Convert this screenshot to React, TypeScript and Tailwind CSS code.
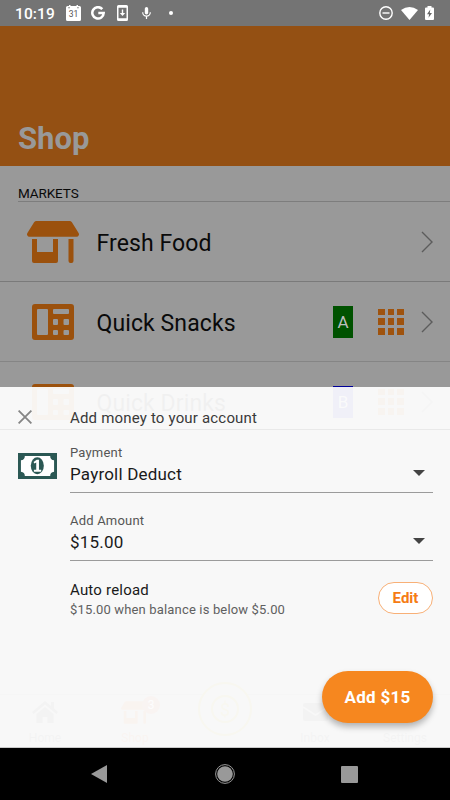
type IconProps = { className?: string };

const StoreIcon = ({ className }: IconProps) => (
  <svg viewBox="0 0 52 42" className={className} fill="currentColor">
    <path d="M9.500 0h33q1.500 0 2.400 1.200L51.600 12q.8 1.500 0 2.500-.5 1.200-2 1.200H2.400q-1.500 0-2-1.200-.8-1 0-2.500L7.100 1.200Q8 0 9.500 0Z" />
    <path d="M5 18h5v13h16V18h5v22q0 2-2 2H7q-2 0-2-2ZM41.500 18h5v22q0 2-2 2h-1q-2 0-2-2Z" />
  </svg>
);

const VendingIcon = ({ className }: IconProps) => (
  <svg viewBox="0 0 42 36" className={className}>
    <path
      fill="currentColor"
      fillRule="evenodd"
      d="M3 0h36q3 0 3 3v30q0 3-3 3H3q-3 0-3-3V3q0-3 3-3ZM6 5q-1 0-1 1v24q0 1 1 1h9q1 0 1-1V6q0-1-1-1ZM22 5q-1 0-1 1v3q0 1 1 1h14q1 0 1-1V6q0-1-1-1ZM22 15q-1 0-1 1v4q0 1 1 1h3q1 0 1-1v-4q0-1-1-1ZM32.500 15q-1 0-1 1v4q0 1 1 1h3.500q1 0 1-1v-4q0-1-1-1ZM22 26q-1 0-1 1v3q0 1 1 1h3q1 0 1-1v-3q0-1-1-1ZM32.500 26q-1 0-1 1v3q0 1 1 1h3.500q1 0 1-1v-3q0-1-1-1Z"
    />
  </svg>
);

const Chevron = () => (
  <svg viewBox="0 0 12 22" className="w-3 h-[22px] shrink-0" fill="none" stroke="#5c5c5c" strokeWidth="1.4">
    <path d="M1 1l10 10L1 21" />
  </svg>
);

const Keypad = () => (
  <div className="grid grid-cols-3 gap-[3px] w-[26px] h-[26px] shrink-0">
    {Array.from({ length: 9 }, (_, i) => (
      <div key={i} className="bg-[#9f530e]" />
    ))}
  </div>
);

const StatusBar = () => (
  <div className="h-[26px] shrink-0 bg-[#747474] flex items-center justify-between pl-[15px] pr-4 text-white">
    <div className="flex items-center">
      <span className="w-[51px] text-[15.500px] leading-[26px] font-medium tracking-[0.1px] pt-px">10:19</span>
      <svg width="15" height="16" viewBox="0 0 15 16">
        <path fill="#fff" fillRule="evenodd" d="M1.500 1H3V0h1.500v1h6V0H12v1h1.500Q15 1 15 2.500v12q0 1.500-1.500 1.500h-12Q0 16 0 14.500v-12Q0 1 1.500 1ZM2.300 2.300h1.500v.9H2.300ZM11.200 2.300h1.500v.9h-1.500Z" />
        <text x="7.500" y="12" textAnchor="middle" fontSize="8.500" fill="#555" fontFamily="Roboto">31</text>
      </svg>
      <svg width="14" height="14" viewBox="0 0 14 14" className="ml-[10px]" fill="none" stroke="#fff" strokeWidth="2.500">
        <path d="M11.300 3.100A5.700 5.700 0 1 0 12.700 7H7.300" />
      </svg>
      <svg width="11" height="16" viewBox="0 0 11 16" className="ml-[12px]">
        <path fill="#fff" fillRule="evenodd" d="M1.500 0h8Q11 0 11 1.500v13Q11 16 9.500 16h-8Q0 16 0 14.500v-13Q0 0 1.500 0ZM1.500 2.800v10.400h8V2.800Z" />
        <path fill="#fff" d="M4.800 4.500h1.400v3.400h2L5.500 11 2.800 7.900h2Z" />
      </svg>
      <svg width="9" height="12" viewBox="0 0 9 12" className="ml-[14px]">
        <rect x="2.800" width="3.400" height="7.500" rx="1.700" fill="#fff" />
        <path d="M.7 5.300a3.800 3.800 0 0 0 7.600 0M4.500 9v3" fill="none" stroke="#fff" strokeWidth="1.200" />
      </svg>
      <span className="ml-[18px] size-1 rounded-full bg-white" />
    </div>
    <div className="flex items-center">
      <svg width="14" height="14" viewBox="0 0 14 14" fill="none" stroke="#fff" strokeWidth="1.400">
        <circle cx="7" cy="7" r="6.200" />
        <path d="M3.500 7h7" />
      </svg>
      <svg width="17" height="13" viewBox="0 0 17 13" className="ml-2" fill="#fff">
        <path d="M0 3Q8.500-3 17 3L8.500 13Z" />
      </svg>
      <svg width="9" height="14" viewBox="0 0 9 14" className="ml-[7px]">
        <path fill="#fff" d="M2.500 1.500V0h4v1.500H8q1 0 1 1V13q0 1-1 1H1q-1 0-1-1V2.500q0-1 1-1Z" />
        <path fill="#666" d="M5.300 3.500 2 8.300h2.100l-.6 3.500L7 7H4.800Z" />
      </svg>
    </div>
  </div>
);

type MarketRowProps = {
  name: string;
  icon: React.ReactNode;
  badge?: string;
  badgeClass?: string;
  borderClass: string;
};

const MarketRow = ({ name, icon, badge, badgeClass, borderClass }: MarketRowProps) => (
  <div className={`h-20 shrink-0 flex items-center pr-[17px] border-b ${borderClass}`}>
    <div className="w-[96.500px] pl-[27px] text-[#9b510d]">{icon}</div>
    <p className="flex-1 text-[23px] leading-7 tracking-[0.1px] text-[#0a0a0a] pt-[5px]">{name}</p>
    {badge && (
      <>
        <div className={`w-5 h-8 mr-[25px] flex items-center justify-center text-[17px] text-[#bdbdbd] pt-0.5 ${badgeClass}`}>{badge}</div>
        <div className="mr-[17px]">
          <Keypad />
        </div>
      </>
    )}
    <Chevron />
  </div>
);

const Tab = ({ label, icon, active }: { label: string; icon?: React.ReactNode; active?: boolean }) => (
  <div className={`w-[90px] flex flex-col items-center text-xs ${active ? "text-[#b05010]" : "text-[#404040]"}`}>
    <div className="h-[34px] flex items-center justify-center">{icon}</div>
    <span className="leading-3 mt-[3px]">{label}</span>
  </div>
);

const TabBar = () => (
  <div className="h-[54px] shrink-0 border-t border-[#7d7d7d] flex">
    <Tab
      label="Home"
      icon={
        <svg width="26" height="22" viewBox="0 0 26 22" fill="currentColor">
          <path d="M13 0 0 11l1.500 2L13 3.500 24.500 13l1.500-2-4-3.500V1h-3v4ZM4.500 13 13 6l8.500 7v9h-6v-6h-5v6h-6Z" />
        </svg>
      }
    />
    <Tab
      active
      label="Shop"
      icon={
        <div className="relative">
          <StoreIcon className="w-[28px] h-[23px]" />
          <span className="absolute -top-[5px] left-[21px] size-[18px] rounded-full bg-[#b0502c] text-[#eee] text-xs leading-[18px] text-center">3</span>
        </div>
      }
    />
    <div className="w-[90px] flex justify-center">
      <svg width="54" height="54" viewBox="0 0 54 54" className="-mt-[13px] shrink-0" fill="none" stroke="#968600" strokeWidth="2">
        <circle cx="27" cy="27" r="26" fill="#999" />
        <circle cx="27" cy="27" r="13" />
        <text x="27" y="33.500" textAnchor="middle" fontSize="18" fill="#968600" stroke="none">$</text>
      </svg>
    </div>
    <Tab
      label="Inbox"
      icon={
        <svg width="25" height="18" viewBox="0 0 25 18">
          <rect width="25" height="18" rx="2" fill="currentColor" />
          <path d="M0 4l12.500 8L25 4" fill="none" stroke="#999" strokeWidth="1.500" />
        </svg>
      }
    />
    <Tab label="Settings" />
  </div>
);

const BillIcon = () => (
  <svg width="39" height="26" viewBox="0 0 40 27" preserveAspectRatio="none">
    <rect width="40" height="27" fill="#2b5854" />
    <path d="M7 3h26q0 4 4 4.500v12q-4 .5-4 4.500H7q0-4-4-4.500v-12Q7 7 7 3Z" fill="#fff" />
    <ellipse cx="19.800" cy="13.300" rx="6.700" ry="8.800" fill="#2b5854" />
    <path d="M16 9.300 19.200 7h2.300v10.300h2.300v2.200h-7.500v-2.200h2.400V9.900L16.700 11Z" fill="#fff" />
  </svg>
);

const SelectField = ({ label, value }: { label: string; value: string }) => (
  <div className="border-b border-[#9b9b9b]">
    <p className="text-[13px] leading-4 tracking-[0.2px] text-[#555]">{label}</p>
    <div className="h-[31px] flex justify-between items-start pr-2">
      <p className="text-[17px] leading-[26px] tracking-[0.2px] text-[#1a1a1a]">{value}</p>
      <svg width="12" height="6" viewBox="0 0 12 6" className="mt-[9px]">
        <path d="M0 0h12L6 6Z" fill="#444" />
      </svg>
    </div>
  </div>
);

const AddMoneySheet = () => (
  <div className="absolute left-0 right-0 top-[387px] h-[361px] bg-[#fdfdfd]/95 border-b border-[#c9c9c9] flex flex-col">
    <div className="h-[43px] shrink-0 flex items-start pl-[18px] border-b border-[#e9e9e9]">
      <svg width="14" height="14" viewBox="0 0 14 14" stroke="#858585" strokeWidth="1.800" className="mt-[23px]">
        <path d="M.6.6l12.800 12.800M13.400.6.6 13.400" />
      </svg>
      <h2 className="ml-[38px] mt-[21px] text-[15px] leading-5 tracking-[0.18px] text-[#3a3a3a]">Add money to your account</h2>
    </div>
    <div className="flex pl-[18px] pr-[17px] pt-[15px]">
      <div className="w-[52px] pt-2">
        <BillIcon />
      </div>
      <div className="flex-1 flex flex-col gap-5">
        <SelectField label="Payment" value="Payroll Deduct" />
        <SelectField label="Add Amount" value="$15.00" />
        <div className="flex justify-between">
          <div className="-mt-px">
            <p className="text-[15px] leading-5 tracking-[0.2px] text-[#1a1a1a]">Auto reload</p>
            <p className="text-[13px] leading-4 tracking-[0.16px] text-[#606060] pt-0.5">$15.00 when balance is below $5.00</p>
          </div>
          <button className="w-[55px] h-8 mt-px pt-px rounded-full border border-[#f8b077] bg-white text-[15px] font-bold text-[#f57c14]">Edit</button>
        </div>
      </div>
    </div>
    <button className="absolute right-[17px] bottom-[24px] w-[111px] h-[52px] pt-0.5 rounded-full bg-[#f6871f] text-[17px] tracking-[0.25px] font-bold text-white shadow-[0_4px_6px_rgba(0,0,0,0.28)]">
      Add $15
    </button>
  </div>
);

const SystemNav = () => (
  <div className="h-[52px] shrink-0 bg-black flex items-center justify-between pl-[91px] pr-[92px]">
    <svg width="16" height="18" viewBox="0 0 16 18">
      <path d="M0 9 16 0v18Z" fill="#999" />
    </svg>
    <svg width="20" height="20" viewBox="0 0 20 20" className="ml-0.5">
      <circle cx="10" cy="10" r="9.400" fill="none" stroke="#999" />
      <circle cx="10" cy="10" r="7.800" fill="#999" />
    </svg>
    <div className="size-[17px] rounded-[1px] bg-[#999]" />
  </div>
);

export default function App() {
  return (
    <div className="relative w-[450px] h-[800px] overflow-hidden bg-[#999] flex flex-col font-[Roboto,sans-serif]">
      <StatusBar />
      <header className="h-[140px] shrink-0 bg-[#945013] flex items-end pl-[18px] pb-[9px]">
        <h1 className="text-[31px] leading-9 font-bold text-[#999]">Shop</h1>
      </header>
      <main className="flex-1 min-h-0 overflow-hidden flex flex-col">
        <h3 className="ml-[18px] h-9 shrink-0 border-b border-[#7d7d7d] text-[13.500px] leading-4 tracking-[-0.1px] text-[#0a0a0a] pt-[19px]">MARKETS</h3>
        <MarketRow name="Fresh Food" icon={<StoreIcon className="w-[52px] h-[42px]" />} borderClass="border-[#7a7a7a]" />
        <MarketRow
          name="Quick Snacks"
          icon={<VendingIcon className="ml-[5px] w-[42px] h-9" />}
          badge="A"
          badgeClass="bg-[#005200]"
          borderClass="border-[#858585]"
        />
        <MarketRow
          name="Quick Drinks"
          icon={<VendingIcon className="ml-[5px] w-[42px] h-9" />}
          badge="B"
          badgeClass="bg-[#000099]"
          borderClass="border-transparent"
        />
      </main>
      <TabBar />
      <SystemNav />
      <AddMoneySheet />
    </div>
  );
}
